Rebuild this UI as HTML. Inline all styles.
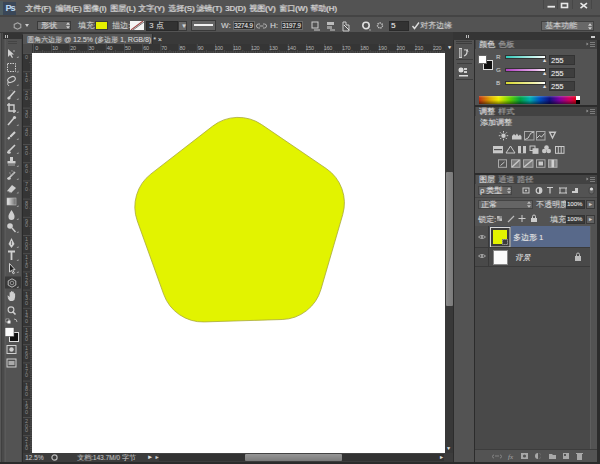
<!DOCTYPE html>
<html><head><meta charset="utf-8">
<style>
*{margin:0;padding:0;box-sizing:border-box}
html,body{width:600px;height:464px;overflow:hidden;background:#535353;font-family:"Liberation Sans",sans-serif;}
.a{position:absolute}
.t{position:absolute;color:#d2d2d2;font-size:8px;line-height:8px;white-space:nowrap;text-shadow:0.5px 0.3px 0 rgba(180,180,180,0.55)}
.in{position:absolute;background:#323232;border:1px solid #2a2a2a}
.dd{position:absolute;background:#686868;border:1px solid #3a3a3a}
</style></head><body>
<!-- ===== menu bar ===== -->
<div class="a" style="left:0;top:0;width:600px;height:16px;background:#535353"></div>
<div class="a" style="left:0;top:15px;width:600px;height:2px;background:#444"></div>
<div class="a" style="left:0;top:1px;width:3px;height:14px;background:#4e5c60"></div>
<div class="a" style="left:3px;top:2px;width:13px;height:13px;background:#3a4758"></div>
<div class="t" style="left:5.5px;top:3.5px;font-size:9px;line-height:9px;color:#b8d4f0;font-weight:bold;letter-spacing:-0.9px">Ps</div>
<div id="menu" style="font-size:8px">
<div class="t" style="left:25px;top:4px;font-size:7.8px;line-height:9px;color:#d8d8d8;text-shadow:0.6px 0.4px 0 #bcbcbc">文件(F)</div>
<div class="t" style="left:55px;top:4px;font-size:7.8px;line-height:9px;color:#d8d8d8;text-shadow:0.6px 0.4px 0 #bcbcbc">编辑(E)</div>
<div class="t" style="left:83px;top:4px;font-size:7.8px;line-height:9px;color:#d8d8d8;text-shadow:0.6px 0.4px 0 #bcbcbc">图像(I)</div>
<div class="t" style="left:110px;top:4px;font-size:7.8px;line-height:9px;color:#d8d8d8;text-shadow:0.6px 0.4px 0 #bcbcbc">图层(L)</div>
<div class="t" style="left:138px;top:4px;font-size:7.8px;line-height:9px;color:#d8d8d8;text-shadow:0.6px 0.4px 0 #bcbcbc">文字(Y)</div>
<div class="t" style="left:168px;top:4px;font-size:7.8px;line-height:9px;color:#d8d8d8;text-shadow:0.6px 0.4px 0 #bcbcbc">选择(S)</div>
<div class="t" style="left:196px;top:4px;font-size:7.8px;line-height:9px;color:#d8d8d8;text-shadow:0.6px 0.4px 0 #bcbcbc">滤镜(T)</div>
<div class="t" style="left:225px;top:4px;font-size:7.8px;line-height:9px;color:#d8d8d8;text-shadow:0.6px 0.4px 0 #bcbcbc">3D(D)</div>
<div class="t" style="left:249px;top:4px;font-size:7.8px;line-height:9px;color:#d8d8d8;text-shadow:0.6px 0.4px 0 #bcbcbc">视图(V)</div>
<div class="t" style="left:279px;top:4px;font-size:7.8px;line-height:9px;color:#d8d8d8;text-shadow:0.6px 0.4px 0 #bcbcbc">窗口(W)</div>
<div class="t" style="left:310px;top:4px;font-size:7.8px;line-height:9px;color:#d8d8d8;text-shadow:0.6px 0.4px 0 #bcbcbc">帮助(H)</div>
</div>
<!-- window buttons -->
<svg class="a" style="left:543px;top:0" width="50" height="10">
 <path d="M0.5 0V9M14.5 0V9M29.5 0V9M48.5 0V9" stroke="#474747" stroke-width="1"/>
 <rect x="4.5" y="5.8" width="7.5" height="1.8" fill="#e8e8e8"/>
 <rect x="18.5" y="3.5" width="6" height="4" fill="none" stroke="#e8e8e8" stroke-width="1.6"/>
 <path d="M37.5 3.2L44 8.2M44 3.2L37.5 8.2" stroke="#e8e8e8" stroke-width="1.6"/>
</svg>
<!-- ===== options bar ===== -->
<div class="a" style="left:0;top:32px;width:600px;height:3px;background:#373737"></div>
<!-- tool icon -->
<svg class="a" style="left:13px;top:21px" width="10" height="10"><polygon points="4.5,1.8 7.8,3.4 7.8,6.6 4.5,8.2 1.2,6.6 1.2,3.4" fill="none" stroke="#a8a8a8" stroke-width="1.1"/></svg>
<svg class="a" style="left:25px;top:24px" width="4" height="3"><path d="M0 0h4l-2 3z" fill="#ccc"/></svg>
<div class="dd" style="left:37px;top:21px;width:34px;height:9px"></div>
<div class="t" style="left:41px;top:22px">形状</div>
<svg class="a" style="left:66px;top:22px" width="4" height="7"><path d="M0 2.8h4L2 0.3zM0 4.2h4L2 6.7z" fill="#d0d0d0"/></svg>
<div class="t" style="left:78px;top:22px">填充:</div>
<div class="a" style="left:95px;top:21px;width:13px;height:9px;background:#e5f000;border:1px solid #3a3a3a"></div>
<div class="t" style="left:112px;top:22px">描边:</div>
<svg class="a" style="left:130px;top:21px" width="14" height="9"><rect x="0" y="0" width="14" height="9" fill="#f4f4f4"/><line x1="1" y1="9" x2="13" y2="0" stroke="#a04848" stroke-width="1.1"/><line x1="3" y1="9" x2="14" y2="1" stroke="#666" stroke-width="0.9"/></svg>
<div class="in" style="left:146px;top:21px;width:32px;height:10px"></div>
<div class="t" style="left:149px;top:22px">3 点</div>
<div class="dd" style="left:178px;top:21px;width:9px;height:10px"></div>
<div class="t" style="left:181px;top:22px;font-size:6px">▼</div>
<div class="dd" style="left:191px;top:20px;width:25px;height:11px;background:#646464"></div>
<div class="a" style="left:194px;top:24px;width:19px;height:2px;background:#f0f0f0"></div>
<div class="t" style="left:221px;top:22px">W:</div>
<div class="in" style="left:233px;top:21px;width:22px;height:9px;background:#2e2e2e;border-color:#6a6a6a"></div>
<div class="t" style="left:234px;top:22px;font-size:6.5px;color:#e8e8e8;letter-spacing:-0.2px">3274.9</div>
<svg class="a" style="left:256px;top:22px" width="11" height="8"><path d="M4 2H2.5a2 2 0 0 0 0 4H4M7 2h1.5a2 2 0 0 1 0 4H7M3.5 4h4" fill="none" stroke="#b0b0b0" stroke-width="1"/></svg>
<div class="t" style="left:270px;top:22px">H:</div>
<div class="in" style="left:281px;top:21px;width:22px;height:9px;background:#2e2e2e;border-color:#6a6a6a"></div>
<div class="t" style="left:282px;top:22px;font-size:6.5px;color:#e8e8e8;letter-spacing:-0.2px">3197.9</div>
<!-- path ops icons -->
<svg class="a" style="left:310px;top:20px" width="45" height="12">
 <rect x="2" y="2" width="6" height="6" fill="none" stroke="#ccc" stroke-width="1"/><line x1="4" y1="10" x2="10" y2="10" stroke="#ccc"/>
 <rect x="17" y="2" width="7" height="3" fill="#bbb"/><rect x="17" y="6" width="5" height="3" fill="#999"/><line x1="20" y1="10" x2="25" y2="10" stroke="#ccc"/>
 <path d="M33 2 l3 0 l0 3 l3 0 l0 6 l-6 0z" fill="none" stroke="#ccc"/><path d="M34 5 l5 5" stroke="#ddd"/>
</svg>
<svg class="a" style="left:361px;top:20px" width="26" height="12">
 <circle cx="5" cy="5.5" r="3.2" fill="none" stroke="#e0e0e0" stroke-width="1.6"/><circle cx="9" cy="10" r="0.8" fill="#aaa"/>
 <circle cx="19" cy="5.5" r="2.5" fill="none" stroke="#ccc" stroke-width="1.4" stroke-dasharray="1.3 0.9"/>
</svg>
<div class="in" style="left:389px;top:21px;width:20px;height:10px"></div>
<div class="t" style="left:391px;top:22px;color:#e8e8e8">5</div>
<svg class="a" style="left:411px;top:21px" width="9" height="9"><path d="M1.5 5 L3.5 7.5 L8 1.5" fill="none" stroke="#ddd" stroke-width="1.4"/></svg>
<div class="t" style="left:420px;top:22px">对齐边缘</div>
<div class="dd" style="left:541px;top:21px;width:53px;height:10px;background:#686868;border-color:#404040"></div>
<div class="t" style="left:545px;top:22px">基本功能</div>
<svg class="a" style="left:588px;top:22.5px" width="4" height="7"><path d="M0 2.8h4L2 0.3zM0 4.2h4L2 6.7z" fill="#d0d0d0"/></svg>


<!-- ===== toolbar ===== -->
<div class="a" style="left:0;top:33px;width:22px;height:431px;background:#4a4a4a"></div><div class="a" style="left:0;top:33px;width:1px;height:431px;background:#575757"></div><div class="a" style="left:1px;top:33px;width:1px;height:431px;background:#404040"></div>
<div class="a" style="left:3px;top:33px;width:19px;height:6px;background:#343434"></div>
<div class="a" style="left:5px;top:35px;width:1px;height:3px;background:#bbb"></div><div class="a" style="left:7px;top:35px;width:1px;height:3px;background:#bbb"></div>
<div class="a" style="left:4px;top:39px;width:17px;height:423px;background:#535353"></div><div class="a" style="left:5px;top:39px;width:1px;height:423px;background:#5a5a5a"></div><div class="a" style="left:8px;top:41px;width:9px;height:1px;background:#444"></div><div class="a" style="left:8px;top:43px;width:9px;height:1px;background:#444"></div>
<svg class="a" style="left:0;top:0" width="22" height="464"><path d="M8 49 L8 57 L10 55 L12 58 L13 57.5 L11.5 54.5 L14 54.5 Z" fill="#cfcfcf"/><path d="M13 51 l2 0 M14 50 l0 2" stroke="#999" stroke-width="0.8"/><rect x="7.5" y="63.5" width="8" height="8" fill="none" stroke="#cfcfcf" stroke-width="1" stroke-dasharray="1.5 1"/><ellipse cx="11.5" cy="79.5" rx="4" ry="2.6" fill="none" stroke="#cfcfcf" stroke-width="1.1" transform="rotate(-25 11.5 79.5)"/><path d="M8 82 q-1 3 1 4" fill="none" stroke="#cfcfcf" stroke-width="0.9"/><path d="M8 99 L15 91" stroke="#cfcfcf" stroke-width="1.5"/><circle cx="9" cy="98" r="1.6" fill="#cfcfcf"/><path d="M9 91 l2 -1 l2 1" fill="none" stroke="#888" stroke-width="0.8" stroke-dasharray="1 0.7"/><path d="M9 103 V111 H16 M7 105 H14 V113" fill="none" stroke="#cfcfcf" stroke-width="1.4"/><path d="M8 125 L14 118" stroke="#cfcfcf" stroke-width="1.6"/><circle cx="14.5" cy="117.5" r="1.6" fill="#cfcfcf"/><path d="M8 139 L15 132" stroke="#cfcfcf" stroke-width="2.2"/><path d="M9 136 l3 3" stroke="#555" stroke-width="0.8"/><path d="M8 153 q0 -2 2 -3 L15 145" fill="none" stroke="#cfcfcf" stroke-width="1.6"/><ellipse cx="9" cy="152.5" rx="1.8" ry="1.2" fill="#cfcfcf"/><rect x="10" y="157" width="3" height="4" fill="#cfcfcf"/><rect x="7.5" y="161" width="8" height="2.5" fill="#cfcfcf"/><rect x="8" y="164.5" width="7" height="1" fill="#aaa"/><path d="M8 179 L15 172" stroke="#cfcfcf" stroke-width="1.6"/><ellipse cx="9" cy="178.5" rx="1.8" ry="1.2" fill="#cfcfcf"/><path d="M10 172 a2 2 0 1 0 1 -1" fill="none" stroke="#999" stroke-width="0.8"/><path d="M7 191 L12 185 L16 188 L11 193 Z" fill="#cfcfcf"/><path d="M7 191 L11 193" stroke="#777" stroke-width="1"/><defs><linearGradient id="g1"><stop offset="0" stop-color="#eee"/><stop offset="1" stop-color="#666"/></linearGradient></defs><rect x="7" y="198" width="9" height="7" fill="url(#g1)" stroke="#bbb" stroke-width="0.6"/><path d="M11.5 210 Q8 215 8.5 217 A3 3 0 0 0 14.5 217 Q15 215 11.5 210 Z" fill="#cfcfcf"/><circle cx="10" cy="226" r="2.8" fill="#cfcfcf"/><path d="M12 228 L15.5 232" stroke="#cfcfcf" stroke-width="1.3"/><path d="M11.5 238 L8.5 244 L11.5 248 L14.5 244 Z" fill="#cfcfcf"/><path d="M11.5 241 l0 4" stroke="#555" stroke-width="0.7"/><path d="M8 251.5 H15 M11.5 251.5 V260" stroke="#cfcfcf" stroke-width="1.8"/><path d="M9.5 263.5 L9.5 272 L11.5 270.3 L13.2 273.8 L14.4 273.2 L12.7 269.8 L15 269.6 Z" fill="#222" stroke="#d0d0d0" stroke-width="1"/><rect x="5" y="276.5" width="16" height="12" fill="#3a3a3a"/><polygon points="12,278.8 15.8,280.9 15.8,285.1 12,287.2 8.2,285.1 8.2,280.9" fill="none" stroke="#c8c8c8" stroke-width="0.9"/><circle cx="12" cy="283" r="1.8" fill="none" stroke="#aaa" stroke-width="0.8"/><path d="M8.5 297.5 l-1.2 -1.5 q0.5 -0.8 1.3 0 l1 1 v-4.5 q0.7 -0.8 1.4 0 v3 v-4 q0.7 -0.8 1.4 0 v4 v-3.5 q0.7 -0.8 1.4 0 v3.5 v-2 q0.7 -0.7 1.3 0 v3.5 q0 3 -2.5 4 h-2.5 q-1.5 -1 -2.6 -3.5z" fill="#cfcfcf"/><circle cx="11" cy="309.8" r="2.9" fill="none" stroke="#cfcfcf" stroke-width="1.1"/><path d="M12.5 311.5 L15.5 314.5" stroke="#cfcfcf" stroke-width="1.6"/><rect x="6" y="319" width="3" height="3" fill="#222" stroke="#ddd" stroke-width="0.6"/><rect x="7.5" y="320.5" width="3" height="3" fill="#eee"/><path d="M14 319 q3 0 3 3" fill="none" stroke="#ccc" stroke-width="0.8"/><rect x="9.5" y="332.5" width="9" height="9" fill="#111" stroke="#ddd" stroke-width="1"/><rect x="5" y="327.5" width="9" height="9" fill="#fafafa" stroke="#444" stroke-width="0.6"/><rect x="7" y="345.5" width="9" height="8" fill="none" stroke="#cfcfcf" stroke-width="1"/><circle cx="11.5" cy="349.5" r="2.2" fill="#cfcfcf"/><rect x="7" y="359" width="9" height="8" fill="none" stroke="#cfcfcf" stroke-width="1"/><rect x="8.5" y="361" width="6" height="4" fill="#aaa"/><path d="M16.5 58.0 l2 0 l0 -2z" fill="#a0a0a0"/><path d="M16.5 72.5 l2 0 l0 -2z" fill="#a0a0a0"/><path d="M16.5 86.0 l2 0 l0 -2z" fill="#a0a0a0"/><path d="M16.5 100.0 l2 0 l0 -2z" fill="#a0a0a0"/><path d="M16.5 113.0 l2 0 l0 -2z" fill="#a0a0a0"/><path d="M16.5 126.0 l2 0 l0 -2z" fill="#a0a0a0"/><path d="M16.5 140.0 l2 0 l0 -2z" fill="#a0a0a0"/><path d="M16.5 154.0 l2 0 l0 -2z" fill="#a0a0a0"/><path d="M16.5 167.0 l2 0 l0 -2z" fill="#a0a0a0"/><path d="M16.5 180.0 l2 0 l0 -2z" fill="#a0a0a0"/><path d="M16.5 193.5 l2 0 l0 -2z" fill="#a0a0a0"/><path d="M16.5 207.0 l2 0 l0 -2z" fill="#a0a0a0"/><path d="M16.5 220.0 l2 0 l0 -2z" fill="#a0a0a0"/><path d="M16.5 233.0 l2 0 l0 -2z" fill="#a0a0a0"/><path d="M16.5 248.0 l2 0 l0 -2z" fill="#a0a0a0"/><path d="M16.5 261.0 l2 0 l0 -2z" fill="#a0a0a0"/><path d="M16.5 273.0 l2 0 l0 -2z" fill="#a0a0a0"/><path d="M16.5 288.0 l2 0 l0 -2z" fill="#a0a0a0"/></svg>


<!-- ===== document area ===== -->
<div class="a" style="left:22px;top:35px;width:1px;height:427px;background:#2a2a2a"></div>
<div class="a" style="left:23px;top:32px;width:430px;height:7px;background:#393939"></div>
<div class="a" style="left:23px;top:39px;width:430px;height:5px;background:#393939"></div>
<div class="a" style="left:23px;top:34px;width:130px;height:10px;background:#555555;border-right:1px solid #2e2e2e"></div>
<div class="t" style="left:27px;top:36px;font-size:7px;line-height:8px">圆角六边形 @ 12.5% (多边形 1, RGB/8) * ×</div>
<div class="a" style="left:23px;top:44px;width:422px;height:9px;background:#353535"></div>
<div class="a" style="left:23px;top:44px;width:9px;height:409px;background:#353535"></div>
<div class="a" style="left:23px;top:44px;width:9px;height:9px;background:#4a4a4a"></div>
<svg class="a" style="left:0;top:0" width="600" height="464"><path d="M33.5 44V53M35.3 51V53M37.1 51V53M39.0 51V53M40.8 51V53M42.6 50V53M44.4 51V53M46.2 51V53M48.1 51V53M49.9 51V53M51.7 44V53M53.5 51V53M55.3 51V53M57.2 51V53M59.0 51V53M60.8 50V53M62.6 51V53M64.4 51V53M66.3 51V53M68.1 51V53M69.9 44V53M71.7 51V53M73.5 51V53M75.4 51V53M77.2 51V53M79.0 50V53M80.8 51V53M82.6 51V53M84.5 51V53M86.3 51V53M88.1 44V53M89.9 51V53M91.7 51V53M93.6 51V53M95.4 51V53M97.2 50V53M99.0 51V53M100.8 51V53M102.7 51V53M104.5 51V53M106.3 44V53M108.1 51V53M109.9 51V53M111.8 51V53M113.6 51V53M115.4 50V53M117.2 51V53M119.0 51V53M120.9 51V53M122.7 51V53M124.5 44V53M126.3 51V53M128.1 51V53M130.0 51V53M131.8 51V53M133.6 50V53M135.4 51V53M137.2 51V53M139.1 51V53M140.9 51V53M142.7 44V53M144.5 51V53M146.3 51V53M148.2 51V53M150.0 51V53M151.8 50V53M153.6 51V53M155.4 51V53M157.3 51V53M159.1 51V53M160.9 44V53M162.7 51V53M164.5 51V53M166.4 51V53M168.2 51V53M170.0 50V53M171.8 51V53M173.6 51V53M175.5 51V53M177.3 51V53M179.1 44V53M180.9 51V53M182.7 51V53M184.6 51V53M186.4 51V53M188.2 50V53M190.0 51V53M191.8 51V53M193.7 51V53M195.5 51V53M197.3 44V53M199.1 51V53M200.9 51V53M202.8 51V53M204.6 51V53M206.4 50V53M208.2 51V53M210.0 51V53M211.9 51V53M213.7 51V53M215.5 44V53M217.3 51V53M219.1 51V53M221.0 51V53M222.8 51V53M224.6 50V53M226.4 51V53M228.2 51V53M230.1 51V53M231.9 51V53M233.7 44V53M235.5 51V53M237.3 51V53M239.2 51V53M241.0 51V53M242.8 50V53M244.6 51V53M246.4 51V53M248.3 51V53M250.1 51V53M251.9 44V53M253.7 51V53M255.5 51V53M257.4 51V53M259.2 51V53M261.0 50V53M262.8 51V53M264.6 51V53M266.5 51V53M268.3 51V53M270.1 44V53M271.9 51V53M273.7 51V53M275.6 51V53M277.4 51V53M279.2 50V53M281.0 51V53M282.8 51V53M284.7 51V53M286.5 51V53M288.3 44V53M290.1 51V53M291.9 51V53M293.8 51V53M295.6 51V53M297.4 50V53M299.2 51V53M301.0 51V53M302.9 51V53M304.7 51V53M306.5 44V53M308.3 51V53M310.1 51V53M312.0 51V53M313.8 51V53M315.6 50V53M317.4 51V53M319.2 51V53M321.1 51V53M322.9 51V53M324.7 44V53M326.5 51V53M328.3 51V53M330.2 51V53M332.0 51V53M333.8 50V53M335.6 51V53M337.4 51V53M339.3 51V53M341.1 51V53M342.9 44V53M344.7 51V53M346.5 51V53M348.4 51V53M350.2 51V53M352.0 50V53M353.8 51V53M355.6 51V53M357.5 51V53M359.3 51V53M361.1 44V53M362.9 51V53M364.7 51V53M366.6 51V53M368.4 51V53M370.2 50V53M372.0 51V53M373.8 51V53M375.7 51V53M377.5 51V53M379.3 44V53M381.1 51V53M382.9 51V53M384.8 51V53M386.6 51V53M388.4 50V53M390.2 51V53M392.0 51V53M393.9 51V53M395.7 51V53M397.5 44V53M399.3 51V53M401.1 51V53M403.0 51V53M404.8 51V53M406.6 50V53M408.4 51V53M410.2 51V53M412.1 51V53M413.9 51V53M415.7 44V53M417.5 51V53M419.3 51V53M421.2 51V53M423.0 51V53M424.8 50V53M426.6 51V53M428.4 51V53M430.3 51V53M432.1 51V53M433.9 44V53M435.7 51V53M437.5 51V53M439.4 51V53M441.2 51V53M443.0 50V53M444.8 51V53M23 53.5H32M30 55.3H32M30 57.1H32M30 59.0H32M30 60.8H32M29 62.6H32M30 64.4H32M30 66.2H32M30 68.1H32M30 69.9H32M23 71.7H32M30 73.5H32M30 75.3H32M30 77.2H32M30 79.0H32M29 80.8H32M30 82.6H32M30 84.4H32M30 86.3H32M30 88.1H32M23 89.9H32M30 91.7H32M30 93.5H32M30 95.4H32M30 97.2H32M29 99.0H32M30 100.8H32M30 102.6H32M30 104.5H32M30 106.3H32M23 108.1H32M30 109.9H32M30 111.7H32M30 113.6H32M30 115.4H32M29 117.2H32M30 119.0H32M30 120.8H32M30 122.7H32M30 124.5H32M23 126.3H32M30 128.1H32M30 129.9H32M30 131.8H32M30 133.6H32M29 135.4H32M30 137.2H32M30 139.0H32M30 140.9H32M30 142.7H32M23 144.5H32M30 146.3H32M30 148.1H32M30 150.0H32M30 151.8H32M29 153.6H32M30 155.4H32M30 157.2H32M30 159.1H32M30 160.9H32M23 162.7H32M30 164.5H32M30 166.3H32M30 168.2H32M30 170.0H32M29 171.8H32M30 173.6H32M30 175.4H32M30 177.3H32M30 179.1H32M23 180.9H32M30 182.7H32M30 184.5H32M30 186.4H32M30 188.2H32M29 190.0H32M30 191.8H32M30 193.6H32M30 195.5H32M30 197.3H32M23 199.1H32M30 200.9H32M30 202.7H32M30 204.6H32M30 206.4H32M29 208.2H32M30 210.0H32M30 211.8H32M30 213.7H32M30 215.5H32M23 217.3H32M30 219.1H32M30 220.9H32M30 222.8H32M30 224.6H32M29 226.4H32M30 228.2H32M30 230.0H32M30 231.9H32M30 233.7H32M23 235.5H32M30 237.3H32M30 239.1H32M30 241.0H32M30 242.8H32M29 244.6H32M30 246.4H32M30 248.2H32M30 250.1H32M30 251.9H32M23 253.7H32M30 255.5H32M30 257.3H32M30 259.2H32M30 261.0H32M29 262.8H32M30 264.6H32M30 266.4H32M30 268.3H32M30 270.1H32M23 271.9H32M30 273.7H32M30 275.5H32M30 277.4H32M30 279.2H32M29 281.0H32M30 282.8H32M30 284.6H32M30 286.5H32M30 288.3H32M23 290.1H32M30 291.9H32M30 293.7H32M30 295.6H32M30 297.4H32M29 299.2H32M30 301.0H32M30 302.8H32M30 304.7H32M30 306.5H32M23 308.3H32M30 310.1H32M30 311.9H32M30 313.8H32M30 315.6H32M29 317.4H32M30 319.2H32M30 321.0H32M30 322.9H32M30 324.7H32M23 326.5H32M30 328.3H32M30 330.1H32M30 332.0H32M30 333.8H32M29 335.6H32M30 337.4H32M30 339.2H32M30 341.1H32M30 342.9H32M23 344.7H32M30 346.5H32M30 348.3H32M30 350.2H32M30 352.0H32M29 353.8H32M30 355.6H32M30 357.4H32M30 359.3H32M30 361.1H32M23 362.9H32M30 364.7H32M30 366.5H32M30 368.4H32M30 370.2H32M29 372.0H32M30 373.8H32M30 375.6H32M30 377.5H32M30 379.3H32M23 381.1H32M30 382.9H32M30 384.7H32M30 386.6H32M30 388.4H32M29 390.2H32M30 392.0H32M30 393.8H32M30 395.7H32M30 397.5H32M23 399.3H32M30 401.1H32M30 402.9H32M30 404.8H32M30 406.6H32M29 408.4H32M30 410.2H32M30 412.0H32M30 413.9H32M30 415.7H32M23 417.5H32M30 419.3H32M30 421.1H32M30 423.0H32M30 424.8H32M29 426.6H32M30 428.4H32M30 430.2H32M30 432.1H32M30 433.9H32M23 435.7H32M30 437.5H32M30 439.3H32M30 441.2H32M30 443.0H32M29 444.8H32M30 446.6H32M30 448.4H32M30 450.3H32M30 452.1H32" stroke="#4e4e4e" stroke-width="1"/><g font-family="Liberation Sans" font-size="5.5" fill="#b4b4b4" letter-spacing="-0.3"><text x="36.7" y="50" text-anchor="middle">0</text><text x="54.9" y="50" text-anchor="middle">10</text><text x="73.1" y="50" text-anchor="middle">20</text><text x="91.3" y="50" text-anchor="middle">30</text><text x="109.5" y="50" text-anchor="middle">40</text><text x="127.7" y="50" text-anchor="middle">50</text><text x="145.9" y="50" text-anchor="middle">60</text><text x="164.1" y="50" text-anchor="middle">70</text><text x="182.3" y="50" text-anchor="middle">80</text><text x="200.5" y="50" text-anchor="middle">90</text><text x="218.7" y="50" text-anchor="middle">100</text><text x="236.9" y="50" text-anchor="middle">110</text><text x="255.1" y="50" text-anchor="middle">120</text><text x="273.3" y="50" text-anchor="middle">130</text><text x="291.5" y="50" text-anchor="middle">140</text><text x="309.7" y="50" text-anchor="middle">150</text><text x="327.9" y="50" text-anchor="middle">160</text><text x="346.1" y="50" text-anchor="middle">170</text><text x="364.3" y="50" text-anchor="middle">180</text><text x="382.5" y="50" text-anchor="middle">190</text><text x="400.7" y="50" text-anchor="middle">200</text><text x="418.9" y="50" text-anchor="middle">210</text><text x="437.1" y="50" text-anchor="middle">220</text><text x="25" y="59.0" fill="#8a8a8a">0</text><text x="25" y="77.2" fill="#8a8a8a">1</text><text x="25" y="81.7" fill="#8a8a8a">0</text><text x="25" y="95.4" fill="#8a8a8a">2</text><text x="25" y="99.9" fill="#8a8a8a">0</text><text x="25" y="113.6" fill="#8a8a8a">3</text><text x="25" y="118.1" fill="#8a8a8a">0</text><text x="25" y="131.8" fill="#8a8a8a">4</text><text x="25" y="136.3" fill="#8a8a8a">0</text><text x="25" y="150.0" fill="#8a8a8a">5</text><text x="25" y="154.5" fill="#8a8a8a">0</text><text x="25" y="168.2" fill="#8a8a8a">6</text><text x="25" y="172.7" fill="#8a8a8a">0</text><text x="25" y="186.4" fill="#8a8a8a">7</text><text x="25" y="190.9" fill="#8a8a8a">0</text><text x="25" y="204.6" fill="#8a8a8a">8</text><text x="25" y="209.1" fill="#8a8a8a">0</text><text x="25" y="222.8" fill="#8a8a8a">9</text><text x="25" y="227.3" fill="#8a8a8a">0</text><text x="25" y="241.0" fill="#8a8a8a">1</text><text x="25" y="245.5" fill="#8a8a8a">0</text><text x="25" y="250.0" fill="#8a8a8a">0</text><text x="25" y="259.2" fill="#8a8a8a">1</text><text x="25" y="263.7" fill="#8a8a8a">1</text><text x="25" y="268.2" fill="#8a8a8a">0</text><text x="25" y="277.4" fill="#8a8a8a">1</text><text x="25" y="281.9" fill="#8a8a8a">2</text><text x="25" y="286.4" fill="#8a8a8a">0</text><text x="25" y="295.6" fill="#8a8a8a">1</text><text x="25" y="300.1" fill="#8a8a8a">3</text><text x="25" y="304.6" fill="#8a8a8a">0</text><text x="25" y="313.8" fill="#8a8a8a">1</text><text x="25" y="318.3" fill="#8a8a8a">4</text><text x="25" y="322.8" fill="#8a8a8a">0</text><text x="25" y="332.0" fill="#8a8a8a">1</text><text x="25" y="336.5" fill="#8a8a8a">5</text><text x="25" y="341.0" fill="#8a8a8a">0</text><text x="25" y="350.2" fill="#8a8a8a">1</text><text x="25" y="354.7" fill="#8a8a8a">6</text><text x="25" y="359.2" fill="#8a8a8a">0</text><text x="25" y="368.4" fill="#8a8a8a">1</text><text x="25" y="372.9" fill="#8a8a8a">7</text><text x="25" y="377.4" fill="#8a8a8a">0</text><text x="25" y="386.6" fill="#8a8a8a">1</text><text x="25" y="391.1" fill="#8a8a8a">8</text><text x="25" y="395.6" fill="#8a8a8a">0</text><text x="25" y="404.8" fill="#8a8a8a">1</text><text x="25" y="409.3" fill="#8a8a8a">9</text><text x="25" y="413.8" fill="#8a8a8a">0</text><text x="25" y="423.0" fill="#8a8a8a">2</text><text x="25" y="427.5" fill="#8a8a8a">0</text><text x="25" y="432.0" fill="#8a8a8a">0</text><text x="25" y="441.2" fill="#8a8a8a">2</text><text x="25" y="445.7" fill="#8a8a8a">1</text><text x="25" y="450.2" fill="#8a8a8a">0</text></g></svg>
<div class="a" style="left:32px;top:53px;width:413px;height:400px;background:#ffffff"></div>
<div class="a" style="left:445px;top:44px;width:8px;height:418px;background:#383838"></div>
<div class="a" style="left:446px;top:172px;width:7px;height:134px;background:linear-gradient(90deg,#8a8a8a,#7a7a7a);border-radius:1px"></div>
<div class="t" style="left:446px;top:446px;font-size:5px;line-height:5px;color:#ddd">▼</div>
<div class="t" style="left:447px;top:45px;font-size:5px;line-height:5px;color:#ddd">▼</div>
<div class="a" style="left:23px;top:453px;width:430px;height:9px;background:#3c3c3c"></div>
<div class="t" style="left:25px;top:454px;font-size:6.5px;line-height:7px;color:#b8b8b8">12.5%</div>
<svg class="a" style="left:50px;top:453px" width="9" height="9"><circle cx="4.5" cy="4.5" r="2.6" fill="none" stroke="#bbb" stroke-width="1.2"/></svg>
<div class="t" style="left:77px;top:454px;font-size:6.5px;line-height:7px;color:#b8b8b8">文档:143.7M/0 字节</div>
<div class="t" style="left:147px;top:454px;font-size:6px;line-height:7px;color:#ddd">►</div>
<div class="t" style="left:154.5px;top:454px;font-size:5px;line-height:7px;color:#ccc">►</div>
<div class="a" style="left:159px;top:453px;width:285px;height:8px;background:#323232;border-top:1px solid #444"></div>
<div class="a" style="left:245px;top:454px;width:97px;height:7px;background:linear-gradient(#969696,#7a7a7a);border-radius:1px"></div>
<div class="t" style="left:439px;top:454px;font-size:5px;line-height:7px;color:#ddd">►</div>
<!-- pentagon -->
<svg class="a" style="left:0;top:0" width="600" height="464"><path d="M261.66 124.60 L326.14 168.47 A41.70 41.70 0 0 1 342.72 214.61 L320.92 289.49 A41.70 41.70 0 0 1 282.17 319.51 L204.22 321.92 A41.70 41.70 0 0 1 163.69 294.34 L137.31 220.95 A41.70 41.70 0 0 1 151.01 173.89 L212.66 126.12 A41.70 41.70 0 0 1 261.66 124.60 Z" fill="#e2f300" stroke="#a8a83a" stroke-width="0.8"/></svg>
<!-- ===== right panels ===== -->
<div class="a" style="left:453px;top:35px;width:147px;height:429px;background:#2c2c2c"></div><div class="a" style="left:453px;top:32px;width:147px;height:8px;background:#353535"></div>
<div class="a" style="left:466px;top:35px;width:1px;height:3px;background:#bbb"></div><div class="a" style="left:468px;top:35px;width:1px;height:3px;background:#bbb"></div>
<div class="a" style="left:591px;top:36px;width:4px;height:2px;background:#ccc"></div>
<!-- icon column -->
<div class="a" style="left:454px;top:40px;width:20px;height:422px;background:#535353"></div>
<div class="a" style="left:456px;top:41px;width:16px;height:1px;background:#3d3d3d"></div>
<div class="a" style="left:456px;top:43px;width:16px;height:1px;background:#3d3d3d"></div>
<svg class="a" style="left:456px;top:46px" width="17" height="34">
 <rect x="3" y="2" width="3" height="10" fill="#cfcfcf"/><rect x="3.5" y="3" width="2" height="8" fill="#888"/>
 <path d="M8 4 q3 -1 3 2 q0 3 -3 4" fill="none" stroke="#cfcfcf" stroke-width="1.2"/><path d="M11 3 l1 3" stroke="#cfcfcf"/>
 <rect x="0" y="13" width="17" height="1" fill="#3d3d3d"/>
 <rect x="1" y="17" width="15" height="1" fill="#3d3d3d"/>
 <rect x="3" y="22" width="4" height="4" fill="#cfcfcf"/><rect x="8" y="22" width="3" height="2" fill="#cfcfcf"/><rect x="8" y="25" width="3" height="2" fill="#cfcfcf"/><circle cx="5" cy="24" r="2.5" fill="#ddd"/>
 <rect x="3" y="29" width="9" height="1.5" fill="#ddd"/>
 <rect x="0" y="33" width="17" height="1" fill="#3d3d3d"/>
</svg>

<!-- color panel -->
<div class="a" style="left:475px;top:40px;width:122px;height:65px;background:#535353"></div>
<div class="a" style="left:475px;top:40px;width:122px;height:9px;background:#424242"></div>
<div class="a" style="left:476px;top:40px;width:18px;height:9px;background:#535353"></div>
<div class="t" style="left:479px;top:41px;font-size:7.5px;line-height:8px;color:#e0e0e0">颜色</div>
<div class="t" style="left:498px;top:41px;font-size:7.5px;line-height:8px;color:#9a9a9a">色板</div>
<svg class="a" style="left:586px;top:41px" width="10" height="7"><path d="M0.5 1.5l2 1.5-2 1.5z" fill="#999"/><path d="M4 1.5h5M4 3.5h5M4 5.5h5" stroke="#8a8a8a" stroke-width="0.8"/></svg>
<div class="a" style="left:483px;top:60px;width:10px;height:10px;background:#111;border:1px solid #ddd"></div>
<div class="a" style="left:478px;top:55px;width:9px;height:9px;background:#fff;border:1px solid #666"></div>
<div class="t" style="left:496px;top:54px;font-size:6px;line-height:7px;color:#c8c8c8">R</div>
<div class="t" style="left:496px;top:67px;font-size:6px;line-height:7px;color:#c8c8c8">G</div>
<div class="t" style="left:496px;top:80px;font-size:6px;line-height:7px;color:#c8c8c8">B</div>
<div class="a" style="left:505px;top:55px;width:41px;height:4px;background:linear-gradient(90deg,#30c8b8,#c8f4ee 75%,#ffffff);border:1px solid #333"></div>
<div class="a" style="left:505px;top:68px;width:41px;height:4px;background:linear-gradient(90deg,#b040c0,#e8b0ec 75%,#ffffff);border:1px solid #333"></div>
<div class="a" style="left:505px;top:81px;width:41px;height:4px;background:linear-gradient(90deg,#d8d830,#f4f4b0 75%,#ffffff);border:1px solid #333"></div>
<div class="t" style="left:542px;top:58px;font-size:5px;line-height:5px;color:#ddd">▲</div>
<div class="t" style="left:542px;top:71px;font-size:5px;line-height:5px;color:#ddd">▲</div>
<div class="t" style="left:542px;top:84px;font-size:5px;line-height:5px;color:#ddd">▲</div>
<div class="in" style="left:549px;top:55px;width:26px;height:10px;background:#3e3e3e;border-color:#333"></div>
<div class="in" style="left:549px;top:68px;width:26px;height:10px;background:#3e3e3e;border-color:#333"></div>
<div class="in" style="left:549px;top:81px;width:26px;height:10px;background:#3e3e3e;border-color:#333"></div>
<div class="t" style="left:551px;top:57px;font-size:7.5px;line-height:8px;color:#e8e8e8">255</div>
<div class="t" style="left:551px;top:70px;font-size:7.5px;line-height:8px;color:#e8e8e8">255</div>
<div class="t" style="left:551px;top:83px;font-size:7.5px;line-height:8px;color:#e8e8e8">255</div>
<div class="a" style="left:479px;top:96px;width:98px;height:8px;background:linear-gradient(90deg,#c03010 0%,#e0b000 12%,#f0f000 20%,#60d000 32%,#00a040 42%,#00b0b0 52%,#0050c0 62%,#101080 72%,#8000a0 82%,#d00060 92%,#e00010 100%)"></div>
<div class="a" style="left:479px;top:100px;width:98px;height:4px;background:linear-gradient(rgba(0,0,0,0),rgba(0,0,0,0.5))"></div>
<div class="a" style="left:479px;top:96px;width:98px;height:2px;background:linear-gradient(rgba(255,255,255,0.25),rgba(255,255,255,0))"></div>
<div class="a" style="left:576px;top:96px;width:4px;height:4px;background:#fff"></div>
<div class="a" style="left:576px;top:100px;width:4px;height:4px;background:#000"></div>

<!-- adjustments panel -->
<div class="a" style="left:475px;top:107px;width:122px;height:66px;background:#535353"></div>
<div class="a" style="left:475px;top:107px;width:122px;height:9px;background:#424242"></div>
<div class="a" style="left:476px;top:107px;width:18px;height:9px;background:#535353"></div>
<div class="t" style="left:479px;top:108px;font-size:7.5px;line-height:8px;color:#e0e0e0">调整</div>
<div class="t" style="left:498px;top:108px;font-size:7.5px;line-height:8px;color:#9a9a9a">样式</div>
<svg class="a" style="left:586px;top:108px" width="10" height="7"><path d="M0.5 1.5l2 1.5-2 1.5z" fill="#999"/><path d="M4 1.5h5M4 3.5h5M4 5.5h5" stroke="#8a8a8a" stroke-width="0.8"/></svg>
<div class="t" style="left:480px;top:119px;font-size:7.5px;line-height:8px;color:#e0e0e0">添加调整</div>
<svg class="a" style="left:476px;top:116px" width="121" height="56">
<g fill="none" stroke="#c8c8c8" stroke-width="1">
 <circle cx="27.5" cy="19.7" r="2.2" fill="#c8c8c8" stroke="none"/><path d="M27.5 15v1.6M27.5 22.8v1.6M22.8 19.7h1.6M30.6 19.7h1.6M24.2 16.4l1.1 1.1M29.7 21.9l1.1 1.1M24.2 23l1.1-1.1M29.7 17.5l1.1-1.1"/>
 <path d="M36 23.5h9.5v-3l-1.5-2-1.5 1.5-1.5-2.5-1.5 2-1.5-1.5-2 2z" fill="#c8c8c8" stroke="none"/>
 <rect x="48.5" y="15.5" width="9.5" height="8.5" stroke="#aaa"/><path d="M49 23.5 q4 -1 4.5 -4 t4.5 -3.5"/>
 <rect x="60.5" y="15.5" width="8.5" height="8.5" stroke="#aaa"/><path d="M61 22 l2.5 -2.5 2 1.5 3 -3.5"/>
 <path d="M72.5 15.5 h8 l-4 8z" fill="#c8c8c8" stroke="none"/><path d="M74.8 17 h3.4 l-1.7 3.6z" fill="#535353" stroke="none"/>
 <rect x="17" y="30" width="10" height="7.3" fill="#c8c8c8" stroke="none"/><rect x="18" y="33" width="8" height="1.2" fill="#535353" stroke="none"/>
 <path d="M30 37 l4.5 -7 4.5 7z"/>
 <rect x="42" y="30" width="8" height="7.3" fill="#c8c8c8" stroke="none"/><rect x="45" y="30" width="2" height="7.3" fill="#535353" stroke="none"/>
 <rect x="54" y="30" width="5" height="4.5"/><rect x="57" y="32.8" width="5" height="4.5" fill="#c8c8c8"/>
 <circle cx="70.5" cy="31.6" r="2.3" fill="#c8c8c8" stroke="none"/><circle cx="68.3" cy="35" r="2.3" fill="#c8c8c8" stroke="none"/><circle cx="72.7" cy="35" r="2.3" fill="#c8c8c8" stroke="none"/>
 <rect x="79.5" y="30.5" width="8.5" height="6.8"/><path d="M82.3 30.5v6.8M85.2 30.5v6.8"/>
 <rect x="22.5" y="43.8" width="8" height="7.5" stroke="#aaa"/><path d="M24.5 49.5 l4-3.5"/>
 <rect x="35.5" y="43.8" width="8.5" height="7.5" fill="#7a7a7a" stroke="#aaa"/><path d="M36 51 l7.5-7" stroke-width="1.4"/>
 <rect x="47.5" y="43.8" width="9.5" height="7.5" fill="#7a7a7a" stroke="#aaa"/><path d="M48 51 l8.5-7" stroke-width="1.4"/>
 <rect x="60.5" y="43.8" width="8.5" height="7.5" stroke="#aaa"/><rect x="62.5" y="45.5" width="4.5" height="4" fill="#c8c8c8" stroke="none"/>
 <rect x="72.5" y="43.8" width="8.5" height="7.5" fill="#8a8a8a" stroke="#aaa"/><rect x="75.5" y="43.8" width="2.5" height="7.5" fill="#d0d0d0" stroke="none"/>
</g>
</svg>

<!-- layers panel -->
<div class="a" style="left:475px;top:175px;width:122px;height:287px;background:#535353"></div>
<div class="a" style="left:475px;top:175px;width:122px;height:9px;background:#424242"></div>
<div class="a" style="left:476px;top:175px;width:18px;height:9px;background:#535353"></div>
<div class="t" style="left:479px;top:176px;font-size:7.5px;line-height:8px;color:#e0e0e0">图层</div>
<div class="t" style="left:498px;top:176px;font-size:7.5px;line-height:8px;color:#9a9a9a">通道</div>
<div class="t" style="left:517px;top:176px;font-size:7.5px;line-height:8px;color:#9a9a9a">路径</div>
<svg class="a" style="left:586px;top:176px" width="10" height="7"><path d="M0.5 1.5l2 1.5-2 1.5z" fill="#999"/><path d="M4 1.5h5M4 3.5h5M4 5.5h5" stroke="#8a8a8a" stroke-width="0.8"/></svg>
<!-- filter row -->
<div class="dd" style="left:478px;top:186px;width:34px;height:9px;background:#666;border-color:#444"></div>
<div class="t" style="left:480px;top:187px;font-size:7.5px;line-height:8px;color:#e0e0e0">ρ 类型</div>
<svg class="a" style="left:507px;top:187px" width="4" height="7"><path d="M0 2.8h4L2 0.3zM0 4.2h4L2 6.7z" fill="#bbb"/></svg>
<svg class="a" style="left:520px;top:185px" width="77" height="11">
 <rect x="3" y="3" width="6" height="5" fill="none" stroke="#ccc"/><circle cx="6" cy="5.5" r="1" fill="#ccc"/>
 <circle cx="19" cy="5.5" r="2.8" fill="none" stroke="#ccc" stroke-width="1.2"/><path d="M19 2.7 a2.8 2.8 0 0 1 0 5.6z" fill="#ccc"/>
 <path d="M27 2.5h6M30 2.5v6" stroke="#ccc" stroke-width="1.2"/>
 <rect x="40" y="3" width="6" height="5" fill="none" stroke="#ccc"/><path d="M39 3h1M46 3h1M39 8h1M46 8h1" stroke="#ccc"/>
 <path d="M52 8 h6 v-5 h-3 v3 h-3z" fill="#ccc"/>
 <rect x="69" y="2" width="5" height="7" rx="2" fill="#666" stroke="#444"/><circle cx="71.5" cy="4" r="1.6" fill="#ddd"/>
</svg>
<div class="a" style="left:475px;top:197px;width:122px;height:1px;background:#444"></div>
<!-- blend row -->
<div class="dd" style="left:478px;top:200px;width:55px;height:9px;background:#656565;border-color:#444"></div>
<div class="t" style="left:481px;top:201px;font-size:7.5px;line-height:8px;color:#e0e0e0">正常</div>
<svg class="a" style="left:527px;top:201px" width="4" height="7"><path d="M0 2.8h4L2 0.3zM0 4.2h4L2 6.7z" fill="#bbb"/></svg>
<div class="t" style="left:536px;top:201px;font-size:7.5px;line-height:8px;color:#d8d8d8">不透明度:</div>
<div class="in" style="left:566px;top:200px;width:19px;height:9px;background:#3a3a3a;border-color:#333"></div>
<div class="t" style="left:567px;top:201px;font-size:6px;line-height:7px;color:#e8e8e8">100%</div>
<div class="dd" style="left:586px;top:200px;width:9px;height:9px;background:#606060"></div>
<div class="t" style="left:588px;top:201px;font-size:5px;line-height:7px;color:#ccc">►</div>
<!-- lock row -->
<div class="t" style="left:478px;top:216px;font-size:7.5px;line-height:8px;color:#d8d8d8">锁定:</div>
<svg class="a" style="left:494px;top:213px" width="50" height="11">
 <rect x="3" y="3" width="5" height="5" fill="#888"/><rect x="3" y="3" width="2.5" height="2.5" fill="#bbb"/><rect x="5.5" y="5.5" width="2.5" height="2.5" fill="#bbb"/>
 <path d="M14 9 l6 -6" stroke="#bbb" stroke-width="1.2"/>
 <path d="M28 2v7M24.5 5.5h7" stroke="#ccc" stroke-width="1"/>
 <rect x="37" y="5" width="6" height="4" fill="#ccc"/><path d="M38.5 5v-1.5a1.5 1.5 0 0 1 3 0v1.5" fill="none" stroke="#ccc"/>
</svg>
<div class="t" style="left:550px;top:216px;font-size:7.5px;line-height:8px;color:#d8d8d8">填充:</div>
<div class="in" style="left:566px;top:215px;width:19px;height:9px;background:#3a3a3a;border-color:#333"></div>
<div class="t" style="left:567px;top:216px;font-size:6px;line-height:7px;color:#e8e8e8">100%</div>
<div class="dd" style="left:586px;top:215px;width:9px;height:9px;background:#606060"></div>
<div class="t" style="left:588px;top:216px;font-size:5px;line-height:7px;color:#ccc">►</div>
<!-- layer list -->
<div class="a" style="left:475px;top:226px;width:115px;height:223px;background:#494949"></div>
<div class="a" style="left:590px;top:226px;width:7px;height:223px;background:#535353;border-left:1px solid #5e5e5e"></div>
<div class="a" style="left:475px;top:226px;width:14px;height:21px;background:#4d4d4d"></div>
<div class="a" style="left:489px;top:226px;width:101px;height:21px;background:#58698a"></div><div class="a" style="left:489px;top:226px;width:22px;height:21px;background:#474c55"></div>
<div class="a" style="left:475px;top:247px;width:115px;height:1px;background:#3a3a3a"></div>
<div class="a" style="left:475px;top:266px;width:115px;height:1px;background:#3a3a3a"></div>
<div class="a" style="left:488px;top:226px;width:1px;height:41px;background:#3a3a3a"></div>
<svg class="a" style="left:477px;top:232px" width="10" height="30">
 <path d="M1.5 5 q3.5 -3.2 7 0 q-3.5 3.2 -7 0z" fill="none" stroke="#aaa" stroke-width="0.9"/><circle cx="5" cy="5" r="1.1" fill="#aaa"/>
 <path d="M1.5 24 q3.5 -3.2 7 0 q-3.5 3.2 -7 0z" fill="none" stroke="#aaa" stroke-width="0.9"/><circle cx="5" cy="24" r="1.1" fill="#aaa"/>
</svg>
<svg class="a" style="left:490px;top:227px" width="21" height="20">
 <rect x="0.5" y="0.5" width="19.5" height="19.5" fill="#3c3c3c" stroke="#d8d8d8" stroke-width="1"/>
 <path d="M3 3 h14 v9 h-5 v5 h-9z" fill="#e2f300"/>
 <rect x="12.5" y="12.5" width="5" height="5" fill="none" stroke="#cfcfcf" stroke-width="0.8" stroke-dasharray="1.2 0.8"/>
</svg>
<div class="a" style="left:493px;top:250px;width:15px;height:15px;background:#fbfbfb;border:1px solid #888"></div>
<div class="t" style="left:513px;top:234px;font-size:7.5px;line-height:8px;color:#e8e8e8">多边形 1</div>
<div class="t" style="left:515px;top:254px;font-size:7.5px;line-height:8px;color:#e8e8e8;transform:skewX(-12deg)">背景</div>
<svg class="a" style="left:574px;top:252px" width="8" height="10"><rect x="1" y="4" width="6" height="5" fill="#bbb"/><path d="M2.5 4v-1.5a1.5 1.5 0 0 1 3 0v1.5" fill="none" stroke="#bbb"/></svg>
<!-- layers footer -->
<div class="a" style="left:475px;top:449px;width:122px;height:13px;background:#535353;border-top:1px solid #3d3d3d"></div>
<svg class="a" style="left:490px;top:451px" width="100" height="10">
 <path d="M5 5h4M4 4 a1.5 1.5 0 0 0 0 3M10 4 a1.5 1.5 0 0 1 0 3" fill="none" stroke="#888" stroke-width="0.9"/>
 <text x="18" y="8" font-family="Liberation Serif" font-style="italic" font-size="7" fill="#a8a8a8">fx</text>
 <rect x="31" y="2" width="7" height="6" fill="#a8a8a8"/><circle cx="34.5" cy="5" r="1.6" fill="#535353"/>
 <circle cx="48" cy="5" r="3" fill="#a8a8a8"/><path d="M48 2 a3 3 0 0 1 0 6z" fill="#535353"/>
 <path d="M59 3h3l1 1h3v4h-7z" fill="#a8a8a8"/>
 <rect x="73" y="2" width="6" height="6" fill="#a8a8a8"/><rect x="74" y="3" width="2" height="2" fill="#535353"/>
 <rect x="87" y="3" width="5" height="6" fill="#a8a8a8"/><rect x="86" y="2" width="7" height="1" fill="#a8a8a8"/>
</svg>
<div class="a" style="left:0;top:462px;width:600px;height:2px;background:#2b2b2b"></div>
</body></html>
